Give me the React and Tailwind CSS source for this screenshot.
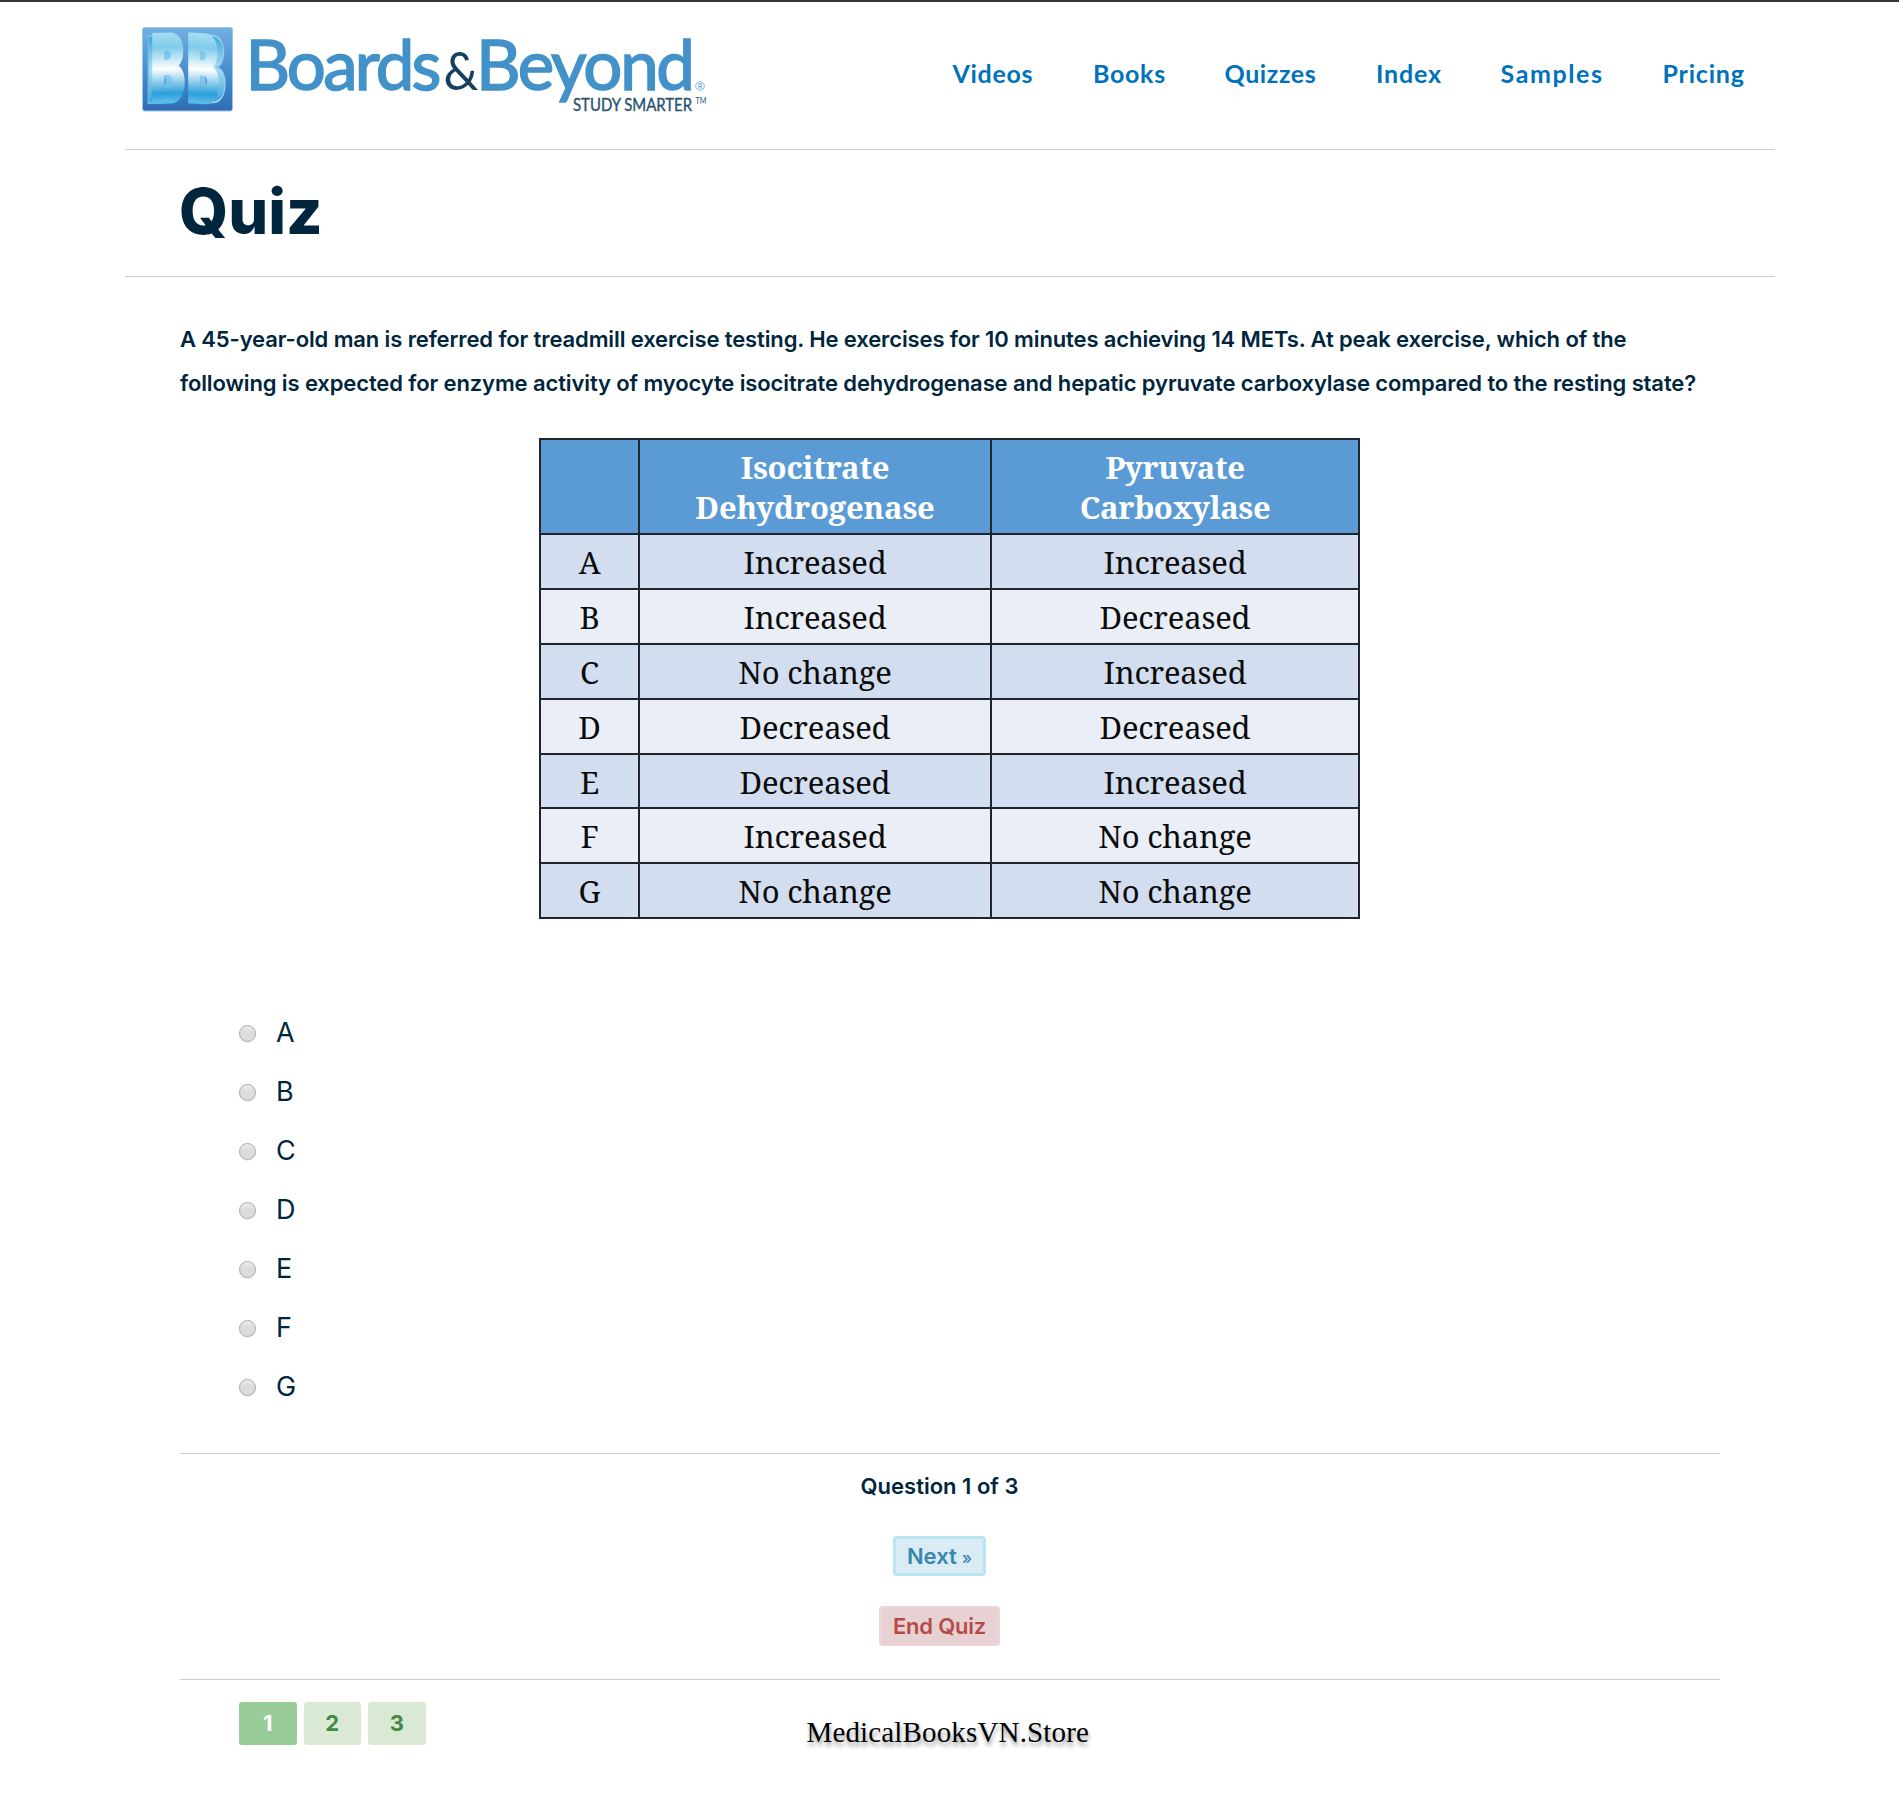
const navItems = [
  { label: "Videos", className: "w-[81px] tracking-[0.7px]" },
  { label: "Books", className: "w-[72px] tracking-[0.7px]" },
  { label: "Quizzes", className: "w-[92px] tracking-[0.6px]" },
  { label: "Index", className: "w-[65px] tracking-[0.8px]" },
  { label: "Samples", className: "w-[102.5px] tracking-[1.6px]" },
  { label: "Pricing", className: "w-[83px] tracking-[0.8px]" },
];

const rows = [
  ["A", "Increased", "Increased"],
  ["B", "Increased", "Decreased"],
  ["C", "No change", "Increased"],
  ["D", "Decreased", "Decreased"],
  ["E", "Decreased", "Increased"],
  ["F", "Increased", "No change"],
  ["G", "No change", "No change"],
];

function Logo() {
  return (
    <svg width="570" height="90" viewBox="141 26 570 90" className="shrink-0 overflow-visible" aria-label="Boards & Beyond">
      <defs>
        <linearGradient id="tile" x1="0" y1="0" x2="0" y2="1">
          <stop offset="0" stopColor="#73b0e2" />
          <stop offset="0.5" stopColor="#4a8fcf" />
          <stop offset="1" stopColor="#2f6db5" />
        </linearGradient>
        <linearGradient id="face" gradientUnits="userSpaceOnUse" x1="0" y1="-68" x2="0" y2="0">
          <stop offset="0" stopColor="#a5dcf2" />
          <stop offset="0.2" stopColor="#7fcbea" />
          <stop offset="0.52" stopColor="#ffffff" />
          <stop offset="0.88" stopColor="#2a9fdb" />
          <stop offset="1" stopColor="#5bbbe6" />
        </linearGradient>
        <linearGradient id="side" gradientUnits="userSpaceOnUse" x1="0" y1="-68" x2="0" y2="0">
          <stop offset="0" stopColor="#3da5dd" />
          <stop offset="0.5" stopColor="#a9dcf2" />
          <stop offset="1" stopColor="#38a0d8" />
        </linearGradient>
      </defs>
      <rect x="142.5" y="27.5" width="90" height="83.5" rx="2" fill="url(#tile)" stroke="#9cc6e8" />
      <g fontFamily="Inter, sans-serif" fontWeight="900" fontSize="92">
        <g transform="translate(146 103) skewY(-1.5) scale(0.5 1)">
          <text fill="url(#side)" stroke="#6cc3e9" strokeWidth="2">B</text>
        </g>
        <g transform="translate(151 102) skewY(-1.5) scale(0.55 1)">
          <text fill="url(#face)" stroke="url(#face)" strokeWidth="4">B</text>
        </g>
        <g transform="translate(192.5 101.5) skewY(2.5) scale(0.55 1)">
          <text fill="url(#side)" stroke="#8fd0ee" strokeWidth="2">B</text>
        </g>
        <g transform="translate(187 101.5) skewY(2.5) scale(0.52 1)">
          <text fill="url(#face)" stroke="url(#face)" strokeWidth="4">B</text>
        </g>
      </g>
      <g fontFamily="Lato, sans-serif" fill="#4292c9" fontSize="69">
        <g stroke="#4292c9" strokeWidth="1.6">
          <text x="245.5" y="90" textLength="196" lengthAdjust="spacing">Boards</text>
          <text x="476" y="90" textLength="219" lengthAdjust="spacing">Beyond</text>
        </g>
        <text x="443.5" y="90" fontSize="53" fill="#173f5f" textLength="35" lengthAdjust="spacingAndGlyphs">&amp;</text>
        <text x="573" y="111" fontSize="17" fill="#2b526f" stroke="#2b526f" strokeWidth="0.4" textLength="119" lengthAdjust="spacingAndGlyphs">STUDY SMARTER</text>
        <text x="695.5" y="104" fontSize="8.5" fill="#2b526f" textLength="11" lengthAdjust="spacingAndGlyphs">TM</text>
        <circle cx="700" cy="86" r="4.3" fill="none" stroke="#8abde0" />
        <text x="697.9" y="88.6" fontSize="7">R</text>
      </g>
    </svg>
  );
}

function AnswerTable() {
  return (
    <div className="ml-[539px] mt-[33px] grid w-[821px] grid-cols-[97px_350px_366px] grid-rows-[93px_53px_53px_53px_53px_52px_53px_53px] gap-[2px] bg-[#20252c] p-[2px] text-center font-['Noto_Serif','DejaVu_Serif_Condensed',serif] text-[31px] tracking-[-0.2px] text-[#0b0b0b]">
      <div className="bg-[#5b9bd5]" />
      <div className="bg-[#5b9bd5] pt-[7px] font-bold leading-[40px] tracking-[-0.2px] text-white">Isocitrate<br />Dehydrogenase</div>
      <div className="bg-[#5b9bd5] pt-[7px] font-bold leading-[40px] tracking-[-0.4px] text-white">Pyruvate<br />Carboxylase</div>
      {rows.map((row, i) =>
        row.map((cell, j) => (
          <div key={`${i}-${j}`} className={`leading-[54px] ${i % 2 === 0 ? "bg-[#d2deef]" : "bg-[#eaeff7]"}`}>
            {cell}
          </div>
        ))
      )}
    </div>
  );
}

function PageButton({ n, active }) {
  return (
    <button className={`h-[43px] w-[57.5px] rounded-[3px] text-[22px] font-bold leading-[41px] ${active ? "bg-[#99cc99] text-white" : "bg-[#d9e9d3] text-[#468847]"}`}>
      {n}
    </button>
  );
}

export default function App() {
  return (
    <div className="h-[1806px] w-[1899px] overflow-hidden border-t-2 border-[#333] bg-white font-['Inter',sans-serif] text-[#00263e]">
      <header className="ml-[125px] flex h-[148px] w-[1650px] items-start border-b border-[#ccc] pl-4 pt-6">
        <Logo />
        <nav className="ml-[241.5px] flex gap-[59.5px] pt-[32px] font-['Lato',sans-serif] text-[25px] font-bold leading-[30px] text-[#0072bc]">
          {navItems.map((item) => (
            <a key={item.label} className={`whitespace-nowrap ${item.className}`}>{item.label}</a>
          ))}
        </nav>
      </header>

      <div className="ml-[125px] h-[127px] w-[1650px] border-b border-[#ccc] pl-[54px] pt-[29px]">
        <h1 className="text-[63px] font-extrabold leading-[64px]">Quiz</h1>
      </div>

      <p className="ml-[180px] mt-[40px] whitespace-nowrap text-[22px] font-semibold leading-[44px] tracking-[-0.115px]">
        A 45-year-old man is referred for treadmill exercise testing. He exercises for 10 minutes achieving 14 METs. At peak exercise, which of the
        <br />
        following is expected for enzyme activity of myocyte isocitrate dehydrogenase and hepatic pyruvate carboxylase compared to the resting state?
      </p>

      <AnswerTable />

      <ul className="ml-[239px] mt-[84px]">
        {rows.map(([letter]) => (
          <li key={letter} className="flex h-[59px] items-center">
            <span className="mt-px h-[17px] w-[17px] rounded-full border border-[#a9a9a9] bg-linear-to-b from-[#ededed] to-[#dcdcdc] to-40% shadow-[0_1px_1px_rgba(0,0,0,0.08)]" />
            <span className="ml-[20px] text-[27px] font-[370] leading-[59px]">{letter}</span>
          </li>
        ))}
      </ul>

      <section className="ml-[180px] mt-[37px] flex h-[227px] w-[1540px] flex-col items-center border-y border-[#ccc] pr-[21px] pt-[17px]">
        <div className="text-[22px] font-semibold leading-[30px]">Question 1 of 3</div>
        <button className="mt-[35px] h-10 w-[93px] whitespace-nowrap rounded-[4px] border-[3px] border-[#b9e7f0] bg-[#d9ecf6] text-[22px] font-semibold leading-[34px] text-[#3a87ad]">
          Next<span className="ml-[5px] text-[17px] font-medium">»</span>
        </button>
        <button className="mt-[30px] h-10 w-[121px] rounded-[4px] border-[3px] border-[#eed3d7] bg-[#e6d1d3] text-[22px] font-semibold leading-[34px] tracking-[-0.2px] text-[#b94a48]">
          End Quiz
        </button>
      </section>

      <footer className="ml-[239px] flex items-start pt-[22px]">
        <div className="flex gap-[7px]">
          <PageButton n={1} active />
          <PageButton n={2} />
          <PageButton n={3} />
        </div>
        <div className="ml-[381px] mt-[13px] font-['Liberation_Serif',serif] text-[29px] leading-[34px] tracking-[0.15px] text-black [text-shadow:1px_4px_4px_rgba(0,0,0,0.4)]">
          MedicalBooksVN.Store
        </div>
      </footer>
    </div>
  );
}
